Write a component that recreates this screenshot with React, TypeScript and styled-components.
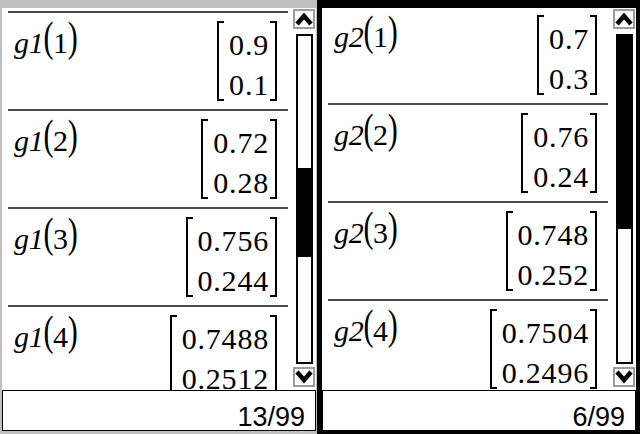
import React from 'react';
import styled, { createGlobalStyle, css } from 'styled-components';

const GlobalStyle = createGlobalStyle`
  html, body { margin: 0; padding: 0; background: #fff; }
  body { width: 640px; height: 434px; overflow: hidden; }
`;

const Screen = styled.div`
  display: flex;
  width: 640px;
  height: 434px;
  background: #fff;
`;

const Pane = styled.div<{ $active?: boolean }>`
  box-sizing: border-box;
  display: flex;
  flex-direction: column;
  flex-shrink: 0;
  height: 434px;
  background: #fff;
  border-style: solid;
  ${p =>
    p.$active
      ? css`
          width: 323px;
          border-color: #000;
          border-width: 8px 4px 3px 5px;
        `
      : css`
          width: 317px;
          border-color: #bfbfbf;
          border-width: 8px 1px 3px 2px;
        `}
`;

const Content = styled.div`
  flex: 1;
  min-height: 0;
  display: flex;
  overflow: hidden;
`;

const List = styled.div<{ $offset: number }>`
  box-sizing: border-box;
  width: 286px;
  flex-shrink: 0;
  padding-left: 6px;
  margin-top: ${p => p.$offset}px;
  display: flex;
  flex-direction: column;
`;

const Entry = styled.div`
  display: flex;
  flex-direction: column;
  flex-shrink: 0;
`;

const Rule = styled.div`
  height: 2px;
  flex-shrink: 0;
  background: #4a4a4a;
`;

const EntryBody = styled.div`
  box-sizing: border-box;
  height: 96px;
  flex-shrink: 0;
  display: flex;
  justify-content: space-between;
  align-items: flex-start;
  padding: 0 11px 0 6px;
`;

const Expr = styled.div`
  font-family: 'Liberation Serif', 'Times New Roman', serif;
  font-size: 30px;
  line-height: 40px;
  padding-top: 10px;
  white-space: nowrap;
  letter-spacing: -0.3px;
  color: #000;
`;

const Fn = styled.span`
  font-style: italic;
`;

const Paren = styled.span`
  display: inline-block;
  line-height: 1;
  transform: scaleY(1.4);
  transform-origin: 50% 100%;
`;

const Matrix = styled.div`
  display: flex;
  height: 80px;
  margin-top: 8px;
`;

const Bracket = styled.div<{ $side: 'left' | 'right' }>`
  box-sizing: border-box;
  width: 7px;
  height: 80px;
  border-top: 2px solid #000;
  border-bottom: 2px solid #000;
  ${p =>
    p.$side === 'left'
      ? css`border-left: 2px solid #000;`
      : css`border-right: 2px solid #000;`}
`;

const Cells = styled.div`
  font-family: 'Liberation Serif', 'Times New Roman', serif;
  font-size: 30px;
  letter-spacing: 0.8px;
  padding: 4px 1px 0 5px;
  text-align: right;
  color: #000;
`;

const Cell = styled.div`
  line-height: 40px;
  white-space: nowrap;
`;

const ScrollBar = styled.div`
  width: 22px;
  flex-shrink: 0;
  margin-left: 5px;
  padding-top: 1px;
  display: flex;
  flex-direction: column;
`;

const ScrollButton = styled.div`
  box-sizing: border-box;
  width: 22px;
  height: 20px;
  flex-shrink: 0;
  border: 2px solid #9c9c9c;
  background: #fff;
  display: flex;
  align-items: center;
  justify-content: center;
`;

const Track = styled.div`
  box-sizing: border-box;
  width: 17px;
  height: 330px;
  flex-shrink: 0;
  margin: 5px 0 3px 3px;
  border: 2px solid #000;
  background: #fff;
  display: flex;
  flex-direction: column;
`;

const Thumb = styled.div<{ $top: number; $size: number }>`
  margin-top: ${p => p.$top}px;
  height: ${p => p.$size}px;
  background: #000;
  flex-shrink: 0;
`;

const Status = styled.div`
  box-sizing: border-box;
  height: 41px;
  flex-shrink: 0;
  border: 1px solid #000;
  padding: 14px 10px 0 0;
  text-align: right;
  font-family: 'Liberation Sans', Arial, sans-serif;
  font-size: 27px;
  line-height: 25px;
  color: #000;
  background: #fff;
`;

const Chevron = ({ up }: { up?: boolean }) => (
  <svg width="18" height="14" viewBox="0 0 18 14">
    <polyline
      points={up ? '2,12 9,4 16,12' : '2,2 9,10 16,2'}
      fill="none"
      stroke="#000"
      strokeWidth="4.5"
      strokeLinejoin="miter"
    />
  </svg>
);

type EntryData = { arg: number; values: [string, string] };
type PaneData = {
  fn: string;
  entries: EntryData[];
  offset: number;
  thumbTop: number;
  thumbSize: number;
  status: string;
  active?: boolean;
};

const panes: PaneData[] = [
  {
    fn: 'g1',
    offset: 3,
    thumbTop: 132,
    thumbSize: 89,
    status: '13/99',
    entries: [
      { arg: 1, values: ['0.9', '0.1'] },
      { arg: 2, values: ['0.72', '0.28'] },
      { arg: 3, values: ['0.756', '0.244'] },
      { arg: 4, values: ['0.7488', '0.2512'] },
    ],
  },
  {
    fn: 'g2',
    offset: -3,
    thumbTop: 0,
    thumbSize: 193,
    status: '6/99',
    active: true,
    entries: [
      { arg: 1, values: ['0.7', '0.3'] },
      { arg: 2, values: ['0.76', '0.24'] },
      { arg: 3, values: ['0.748', '0.252'] },
      { arg: 4, values: ['0.7504', '0.2496'] },
    ],
  },
];

const CalcPane = ({ data }: { data: PaneData }) => (
  <Pane $active={data.active}>
    <Content>
      <List $offset={data.offset}>
        {data.entries.map(e => (
          <Entry key={e.arg}>
            <Rule />
            <EntryBody>
              <Expr>
                <Fn>{data.fn}</Fn>
                <Paren>(</Paren>
                {e.arg}
                <Paren>)</Paren>
              </Expr>
              <Matrix>
                <Bracket $side="left" />
                <Cells>
                  {e.values.map((v, i) => (
                    <Cell key={i}>{v}</Cell>
                  ))}
                </Cells>
                <Bracket $side="right" />
              </Matrix>
            </EntryBody>
          </Entry>
        ))}
      </List>
      <ScrollBar>
        <ScrollButton>
          <Chevron up />
        </ScrollButton>
        <Track>
          <Thumb $top={data.thumbTop} $size={data.thumbSize} />
        </Track>
        <ScrollButton>
          <Chevron />
        </ScrollButton>
      </ScrollBar>
    </Content>
    <Status>{data.status}</Status>
  </Pane>
);

export default function App() {
  return (
    <>
      <GlobalStyle />
      <Screen>
        {panes.map(p => (
          <CalcPane key={p.fn} data={p} />
        ))}
      </Screen>
    </>
  );
}
